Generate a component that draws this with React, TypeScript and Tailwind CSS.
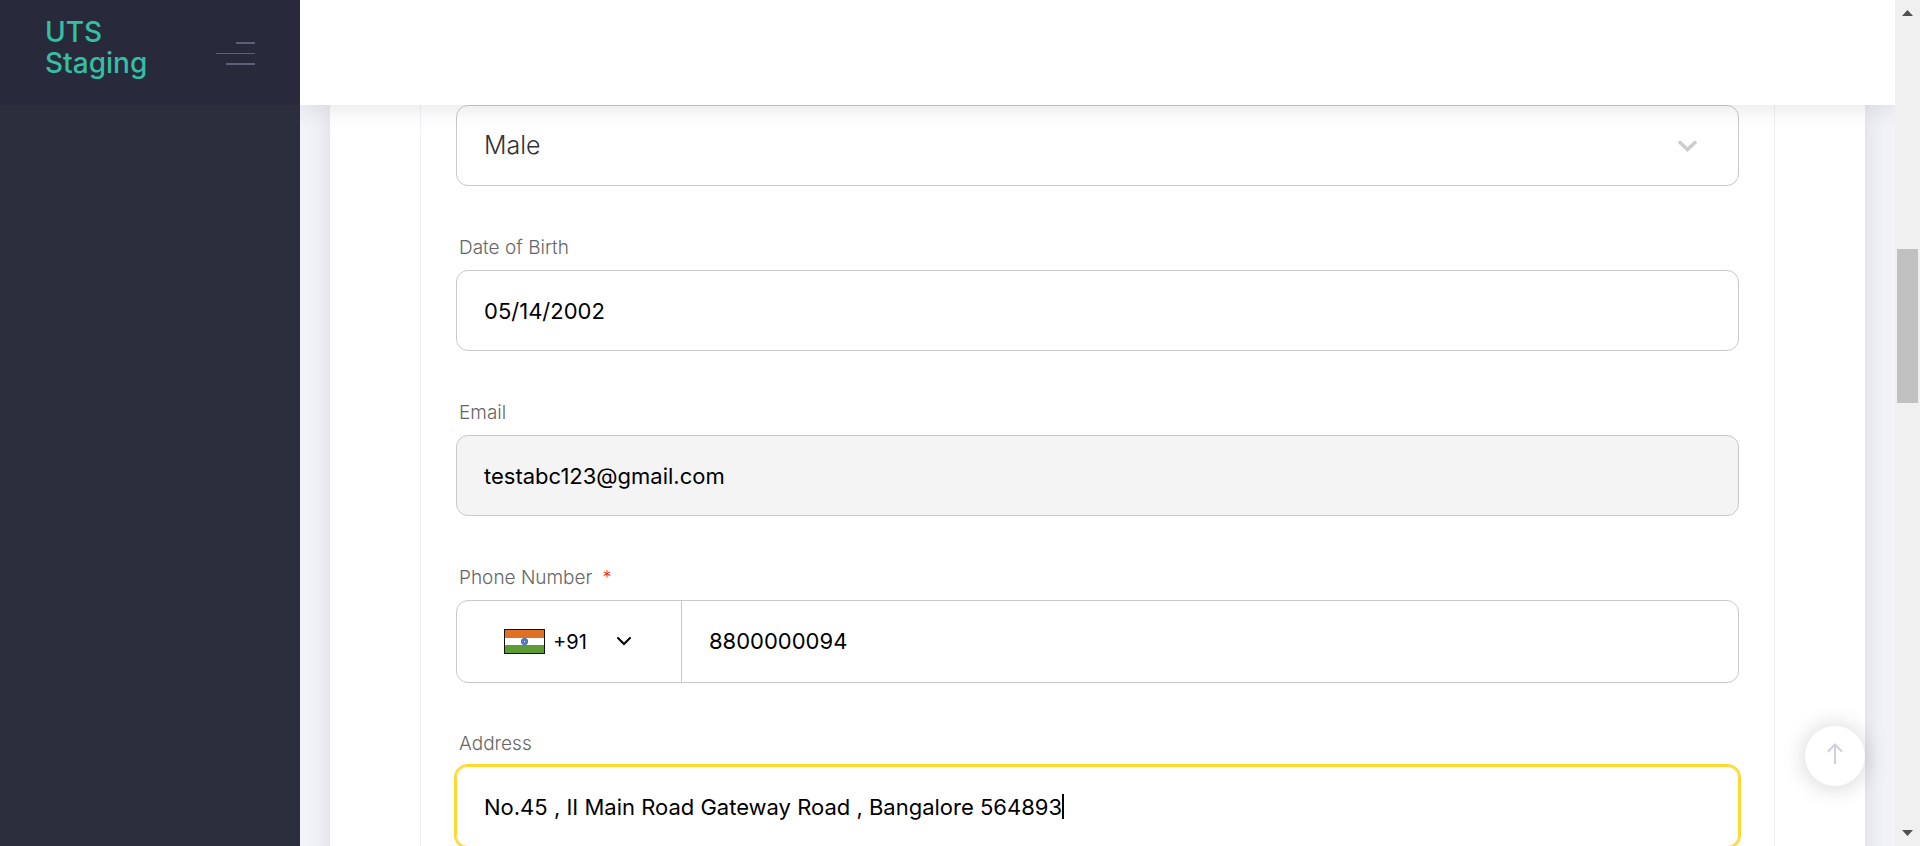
import type { ReactNode } from "react";

const box =
  "h-[81px] w-full rounded-xl border border-[#c9c9c9] px-[27px] text-[22px] text-black outline-none";

function Field({ id, label, required, children }: { id: string; label: string; required?: boolean; children: ReactNode }) {
  return (
    <div>
      <div className="flex h-[84px] items-end px-[3px] pb-2.5">
        <label htmlFor={id} className="text-[19px] leading-6 font-light text-[#666]">
          {label}
          {required && <span className="ml-2.5 text-lg leading-4 text-[#ff2020]">*</span>}
        </label>
      </div>
      {children}
    </div>
  );
}

function IndiaFlag() {
  return (
    <svg width="41" height="25" viewBox="0 0 41 25" aria-hidden="true">
      <rect width="41" height="25" fill="#111" />
      <rect x="1" y="1" width="39" height="8" fill="#e07024" />
      <rect x="1" y="9" width="39" height="7" fill="#fff" />
      <rect x="1" y="16" width="39" height="8" fill="#5c9c32" />
      <circle cx="20.5" cy="12.5" r="3.5" fill="#3f68b0" />
      <circle cx="20.5" cy="12.5" r="2" fill="none" stroke="#7697ca" strokeWidth=".6" />
      <circle cx="20.5" cy="12.5" r=".7" fill="#fff" />
    </svg>
  );
}

function Sidebar() {
  return (
    <aside className="w-[300px] shrink-0 bg-[#2c2e3e]">
      <div className="flex h-[105px] items-start justify-between bg-[#282a3c] px-[45px]">
        <a href="#" className="w-28 pt-[17px] text-[28px] leading-[31px] font-medium text-[#34bfa3]">
          UTS Staging
        </a>
        <button type="button" aria-label="Toggle menu" className="mt-[42px] h-[23px]">
          <svg width="39" height="23" viewBox="0 0 39 23" fill="#5d5f77">
            <rect x="20" width="19" height="2" />
            <rect y="11" width="39" height="1" />
            <rect x="10" y="21" width="29" height="2" />
          </svg>
        </button>
      </div>
    </aside>
  );
}

function Scrollbar() {
  return (
    <div className="flex w-[25px] shrink-0 flex-col items-center bg-[#f0f0f0]" aria-hidden="true">
      <svg className="mt-2.5" width="11" height="6" viewBox="0 0 11 6" fill="#505050">
        <path d="M5.5 0 11 6H0z" />
      </svg>
      <div className="mt-[233px] h-[154px] w-[21px] bg-[#c1c1c1]" />
      <svg className="mt-auto mb-2.5" width="11" height="6" viewBox="0 0 11 6" fill="#505050">
        <path d="M0 0h11L5.500 6z" />
      </svg>
    </div>
  );
}

export default function App() {
  return (
    <div className="flex h-screen overflow-hidden bg-[#f2f3f8] font-['Inter',sans-serif]">
      <Sidebar />
      <div className="flex min-w-0 flex-1 flex-col overflow-hidden">
        <header className="relative z-10 h-[105px] shrink-0 bg-white shadow-[0_1px_22px_1px_rgba(69,65,78,0.15)]" />
        <main className="min-h-0 flex-1 px-[30px]">
          <div className="bg-white px-[90px] shadow-[0_1px_22px_1px_rgba(69,65,78,0.12)]">
            <form className="border-x border-[#f0f1f4] px-[35px] pb-10">
              <div className="relative">
                <select
                  aria-label="Gender"
                  defaultValue="Male"
                  className="h-[81px] w-full appearance-none rounded-xl border border-[#c9c9c9] bg-white px-[27px] text-[25px] font-light text-[#333] outline-none"
                >
                  <option>Male</option>
                  <option>Female</option>
                </select>
                <svg className="pointer-events-none absolute top-[35px] right-[42px]" width="19" height="12" viewBox="0 0 19 12" fill="none" stroke="#ccc" strokeWidth="3.500" strokeLinecap="round">
                  <path d="m2 2.500 7.500 7 7.500-7" />
                </svg>
              </div>
              <Field id="dob" label="Date of Birth">
                <input id="dob" className={box} defaultValue="05/14/2002" />
              </Field>
              <Field id="email" label="Email">
                <input
                  id="email"
                  readOnly
                  value="testabc123@gmail.com"
                  className={`${box} bg-[#f4f4f4]`}
                />
              </Field>
              <Field id="phone" label="Phone Number" required>
                <div className="-mb-px flex h-[83px] overflow-hidden rounded-xl border border-[#c9c9c9]">
                  <button type="button" aria-label="Country code" className="flex w-[225px] shrink-0 items-center border-r border-[#c9c9c9] pl-[47px] text-xl">
                    <IndiaFlag />
                    <span className="w-[72px] pl-2 text-left">+91</span>
                    <svg width="14" height="9" viewBox="0 0 14 9" fill="none" stroke="#000" strokeWidth="2" strokeLinecap="round">
                      <path d="m1 1 6 6 6-6" />
                    </svg>
                  </button>
                  <input id="phone" type="tel" className="min-w-0 flex-1 px-[27px] text-[22px] text-black outline-none" defaultValue="8800000094" />
                </div>
              </Field>
              <Field id="address" label="Address">
                <div className="relative">
                  <input
                    id="address"
                    className="h-[81px] w-full rounded-xl border border-[#fdd92f] px-[27px] text-[22px] text-black caret-transparent outline-2 outline-[#fdd92f]"
                    defaultValue="No.45 , II Main Road Gateway Road , Bangalore 564893"
                  />
                  <span className="absolute top-7 left-[606px] h-[25px] w-0.5 bg-black" />
                </div>
              </Field>
            </form>
          </div>
        </main>
      </div>
      <Scrollbar />
      <button
        type="button"
        aria-label="Scroll to top"
        className="fixed right-[55px] bottom-[60px] z-20 flex size-[60px] items-center justify-center rounded-full bg-white pb-1.5 shadow-[0_1px_22px_1px_rgba(0,0,0,0.17)]"
      >
        <svg width="16" height="21" viewBox="0 0 16 21" fill="none" stroke="#d0cfe0" strokeWidth="2">
          <path d="M8 21V1.500M.8 8.700 8 1.500l7.200 7.200" />
        </svg>
      </button>
    </div>
  );
}
